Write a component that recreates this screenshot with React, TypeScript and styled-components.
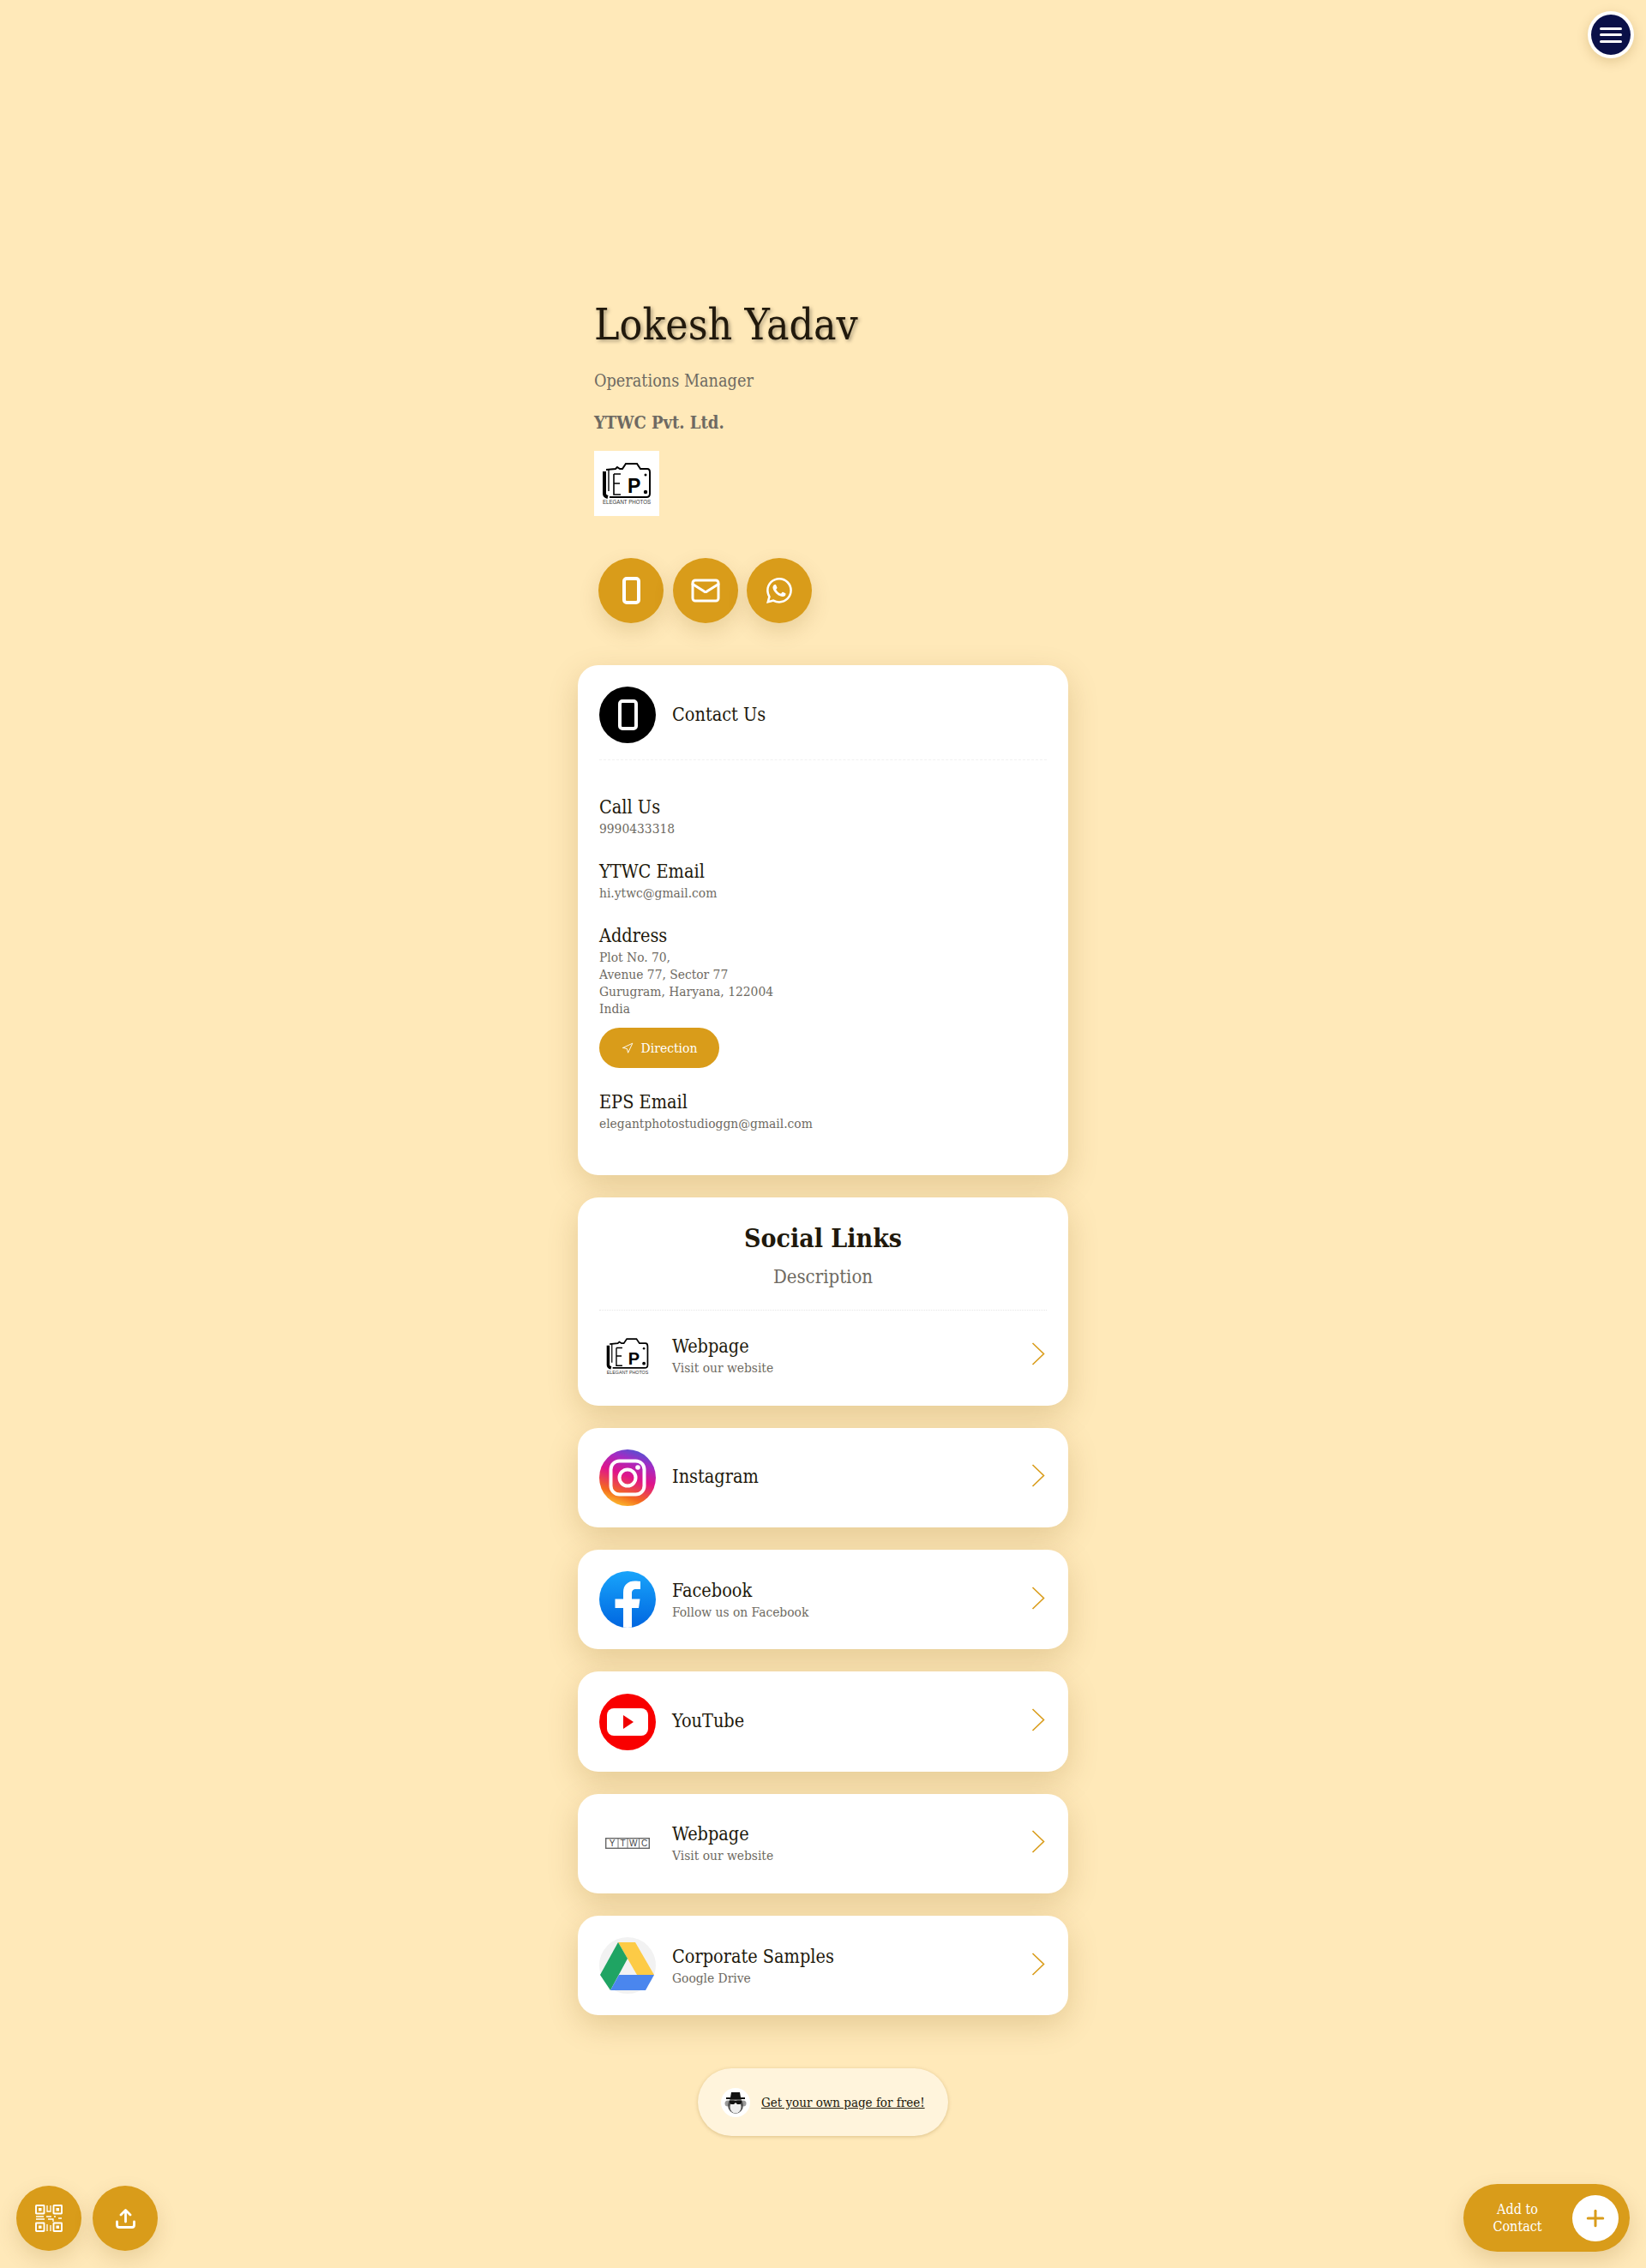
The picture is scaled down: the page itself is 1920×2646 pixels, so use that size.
import React from 'react';
import styled, { createGlobalStyle } from 'styled-components';
import { Mail, Navigation, Plus } from 'lucide-react';
import { BsWhatsapp } from 'react-icons/bs';

const gold = '#d99c1a';
const ink = '#21190c';
const grey = '#6e6a62';
const serif = '"DejaVu Serif Condensed", "DejaVu Serif", serif';

const GlobalStyle = createGlobalStyle`
  html, body {
    margin: 0;
    padding: 0;
    background: #ffe9b9;
  }
  body {
    font-family: ${serif};
    color: ${ink};
  }
`;

const Page = styled.div`
  position: relative;
  min-height: 2646px;
  overflow: hidden;
`;

const Column = styled.main`
  width: 572px;
  margin: 0 auto;
  padding-top: 347px;
`;

const Profile = styled.header`
  padding-left: 19px;
`;

const Name = styled.h1`
  margin: 0;
  font-size: 49.5px;
  line-height: 64px;
  font-weight: 400;
  color: ${ink};
  text-shadow: 2px 2px 4px rgba(0, 0, 0, 0.35);
`;

const Role = styled.p<{ $strong?: boolean }>`
  margin: 20px 0 0;
  font-size: ${p => (p.$strong ? 20 : 19.7)}px;
  line-height: 28px;
  font-weight: ${p => (p.$strong ? 600 : 400)};
  color: ${grey};
`;

const LogoTile = styled.div`
  width: 76px;
  height: 76px;
  margin-top: 19px;
  background: #fff;
`;

const Actions = styled.div`
  display: flex;
  gap: 10.5px;
  margin: 49px 0 49px 5px;
`;

const RoundButton = styled.button`
  width: 76px;
  height: 76px;
  padding: 0;
  border: 0;
  border-radius: 50%;
  display: flex;
  align-items: center;
  justify-content: center;
  color: #fff;
  background: ${gold};
  box-shadow: 0 10px 24px rgba(120, 80, 0, 0.16);
`;

const Card = styled.section`
  background: #fff;
  border-radius: 24px;
  padding: 25px;
  margin-bottom: 26px;
  box-shadow: 0 12px 36px rgba(120, 80, 0, 0.2);
`;

const CardHead = styled.div`
  display: flex;
  align-items: center;
  gap: 19px;
  padding-bottom: 19px;
  border-bottom: 1px dashed #f1f1f1;
  margin-bottom: 40.5px;
`;

const BlackDisc = styled.div`
  width: 66px;
  height: 66px;
  border-radius: 50%;
  background: #000;
  display: flex;
  align-items: center;
  justify-content: center;
`;

const HeadTitle = styled.h2`
  margin: 0;
  font-size: 21.5px;
  font-weight: 400;
  line-height: 28px;
`;

const Info = styled.div`
  margin-bottom: 26px;

  &:last-child {
    margin-bottom: 25px;
  }
`;

const InfoLabel = styled.div`
  font-size: 21.5px;
  line-height: 28px;
  margin-bottom: 1px;
`;

const InfoValue = styled.div`
  font-size: 15.4px;
  line-height: 20px;
  color: ${grey};
`;

const DirectionButton = styled.button`
  display: flex;
  align-items: center;
  justify-content: center;
  gap: 9px;
  width: 140px;
  height: 47px;
  margin-top: 12.5px;
  padding: 0;
  border: 0;
  border-radius: 24px;
  background: ${gold};
  color: #fff;
  font-family: ${serif};
  font-size: 15.5px;
`;

const SocialHead = styled.div`
  text-align: center;
  padding-top: 3px;
  padding-bottom: 23px;
  margin-bottom: 20px;
  border-bottom: 1px dotted #e6e6e6;
`;

const SocialTitle = styled.h2`
  margin: 0;
  font-size: 30px;
  line-height: 40px;
  font-weight: 600;
`;

const SocialDescription = styled.p`
  margin: 9.500px 0 0;
  font-size: 22px;
  line-height: 30px;
  color: ${grey};
`;

const LinkRow = styled.div`
  display: flex;
  align-items: center;
  gap: 19px;
  min-height: 66.3px;
`;

const LinkIcon = styled.div`
  width: 66px;
  height: 66px;
  flex: none;
  display: flex;
  align-items: center;
  justify-content: center;
`;

const LinkText = styled.div`
  flex: 1;
`;

const LinkTitle = styled.div`
  font-size: 21.5px;
  line-height: 28px;
  margin-bottom: 1px;
`;

const LinkSub = styled.div`
  font-size: 15.4px;
  line-height: 20px;
  color: ${grey};
`;

const Chevron = styled.svg`
  width: 16px;
  height: 27px;
  flex: none;
  margin: -4px 2px 0 0;
`;

const Credit = styled.div`
  display: flex;
  align-items: center;
  gap: 13px;
  width: 292px;
  height: 79px;
  box-sizing: border-box;
  margin: 62px auto 0;
  padding-left: 27px;
  border-radius: 40px;
  background: #fff4dc;
  box-shadow: 0 1px 4px rgba(120, 80, 0, 0.26);
`;

const Avatar = styled.div`
  width: 34px;
  height: 34px;
  border-radius: 50%;
  background: #fff;
  display: flex;
  align-items: center;
  justify-content: center;
`;

const CreditLink = styled.a`
  font-size: 15px;
  color: ${ink};
  text-decoration: underline;
`;

const MenuButton = styled.button`
  position: absolute;
  top: 13px;
  right: 14px;
  width: 54px;
  height: 55px;
  box-sizing: border-box;
  padding: 0;
  border: 4px solid #fff;
  border-radius: 50%;
  background: #0a1048;
  display: flex;
  flex-direction: column;
  align-items: center;
  justify-content: center;
  gap: 4.5px;
  box-shadow: 0 4px 14px rgba(120, 80, 0, 0.2);
`;

const MenuBar = styled.span`
  display: block;
  width: 26px;
  height: 3px;
  border-radius: 2px;
  background: #fff;
`;

const Dock = styled.div`
  position: absolute;
  left: 19px;
  bottom: 20px;
  display: flex;
  gap: 13px;
`;

const AddContact = styled.button`
  position: absolute;
  right: 19px;
  bottom: 19px;
  width: 194px;
  height: 79px;
  padding: 0 13px 0 0;
  border: 0;
  border-radius: 40px;
  display: flex;
  align-items: center;
  justify-content: flex-end;
  gap: 24px;
  background: ${gold};
  box-shadow: 0 10px 24px rgba(120, 80, 0, 0.18);
`;

const AddLabel = styled.span`
  width: 80px;
  color: #fff;
  font-family: ${serif};
  font-size: 16px;
  line-height: 20px;
  text-align: center;
`;

const AddDisc = styled.span`
  width: 54px;
  height: 54px;
  flex: none;
  border-radius: 50%;
  background: #fff;
  color: ${gold};
  display: flex;
  align-items: center;
  justify-content: center;
`;

function PhoneIcon({ width, height, stroke }: { width: number; height: number; stroke: number }) {
  return (
    <svg width={width} height={height} viewBox={`0 0 ${width} ${height}`}>
      <rect
        x={stroke / 2}
        y={stroke / 2}
        width={width - stroke}
        height={height - stroke}
        rx={3}
        fill="none"
        stroke="#fff"
        strokeWidth={stroke}
      />
    </svg>
  );
}

function ElegantLogo({ size }: { size: number }) {
  return (
    <svg width={size} height={size} viewBox="0 0 76 76">
      <path
        d="M14 22L25 21L27 19L30 21L33 21L37 15L50 15L54 21L62 21Q65 21 65 25L65 50Q65 54 61 54L18 54"
        fill="none"
        stroke="#000"
        strokeWidth="2"
      />
      <path d="M12 24V50Q12 53 16 54" fill="none" stroke="#000" strokeWidth="4" />
      <path d="M17 22V47" stroke="#000" strokeWidth="1.4" />
      <path d="M23 27V51H31M23 27H31M23 38H30" fill="none" stroke="#000" strokeWidth="1.6" />
      <text x="39" y="49" fontFamily='"Liberation Sans", sans-serif' fontSize="23" fontWeight="700" fill="#000">P</text>
      <circle cx="60" cy="28" r="1.5" fill="#000" />
      <circle cx="60" cy="48" r="2.2" fill="#000" />
      <text x="38" y="62" textAnchor="middle" fontFamily='"Liberation Sans", sans-serif' fontSize="7" fill="#333" textLength="56" lengthAdjust="spacingAndGlyphs">ELEGANT PHOTOS</text>
    </svg>
  );
}

function InstagramIcon() {
  return (
    <svg width="66" height="66" viewBox="0 0 66 66">
      <defs>
        <linearGradient id="igGrad" x1="0.25" y1="1" x2="0.6" y2="0">
          <stop offset="0" stopColor="#fdc830" />
          <stop offset="0.22" stopColor="#f46b1e" />
          <stop offset="0.55" stopColor="#e0148a" />
          <stop offset="0.82" stopColor="#a42bc4" />
          <stop offset="1" stopColor="#5a4fd0" />
        </linearGradient>
      </defs>
      <circle cx="33" cy="33" r="33" fill="url(#igGrad)" />
      <rect x="13.5" y="13.5" width="39" height="39" rx="10" fill="none" stroke="#fff" strokeWidth="4" />
      <circle cx="33" cy="33" r="9.5" fill="none" stroke="#fff" strokeWidth="4" />
      <circle cx="45" cy="21" r="2.8" fill="#fff" />
    </svg>
  );
}

function FacebookIcon() {
  return (
    <svg width="66" height="66" viewBox="0 0 66 66">
      <defs>
        <linearGradient id="fbGrad" x1="0" y1="0" x2="0" y2="1">
          <stop offset="0" stopColor="#18a4fb" />
          <stop offset="1" stopColor="#0066e0" />
        </linearGradient>
        <clipPath id="fbClip">
          <circle cx="33" cy="33" r="33" />
        </clipPath>
      </defs>
      <circle cx="33" cy="33" r="33" fill="url(#fbGrad)" />
      <path
        clipPath="url(#fbClip)"
        d="M28 68V43H18.500V32.500H28V25C28 16 33.500 11.500 41.500 11.500C44.500 11.500 47 11.800 48 12V21H43C39.500 21 38 22.800 38 26V32.500H47.500L46 43H38V68Z"
        fill="#fff"
      />
    </svg>
  );
}

function YoutubeIcon() {
  return (
    <svg width="66" height="66" viewBox="0 0 66 66">
      <circle cx="33" cy="33" r="33" fill="#f90000" />
      <rect x="9" y="17" width="48" height="32" rx="8" fill="#fff" />
      <path d="M28 25L40 33L28 41Z" fill="#f00000" />
    </svg>
  );
}

function YtwcLogo() {
  return (
    <svg width="52" height="13" viewBox="0 0 52 13">
      <rect x="0.7" y="0.7" width="50.600" height="11.600" fill="none" stroke="#666" strokeWidth="1.4" />
      <path d="M15 1V12M26 1V12M39.500 1V12" stroke="#777" />
      <g fontFamily='"Liberation Sans", sans-serif' fontSize="10" fill="#444" textAnchor="middle">
        <text x="8" y="10">Y</text>
        <text x="20.500" y="10">T</text>
        <text x="32.700" y="10">W</text>
        <text x="45.500" y="10">C</text>
      </g>
    </svg>
  );
}

function DriveIcon() {
  return (
    <svg width="66" height="66" viewBox="0 0 66 66">
      <circle cx="33" cy="33" r="33" fill="#f2f2f2" />
      <path d="M22 6H42L64 44H44Z" fill="#fdcb46" />
      <path d="M22 6L1 44L13 62L33 25Z" fill="#1fa463" />
      <path d="M23 44H64L54 62H13Z" fill="#4a86ee" />
    </svg>
  );
}

function QrIcon() {
  return (
    <svg width="32" height="32" viewBox="0 0 32 32" fill="none" stroke="#fff" strokeWidth="1.9">
      <rect x="1" y="1" width="9.500" height="9.500" rx="0.5" />
      <rect x="21.500" y="1" width="9.500" height="9.500" rx="0.5" />
      <rect x="1" y="21.500" width="9.500" height="9.500" rx="0.5" />
      <rect x="21.500" y="21.500" width="9.500" height="9.500" rx="0.5" />
      <g fill="#fff" stroke="none">
        <rect x="4" y="4" width="3.500" height="3.500" />
        <rect x="24.500" y="4" width="3.500" height="3.500" />
        <rect x="4" y="24.500" width="3.500" height="3.500" />
        <rect x="24.500" y="24.500" width="3.500" height="3.500" />
      </g>
      <g strokeWidth="1.300">
        <path d="M14 1V8H18V1M1 14H10M13 14H19M22 14H24M27 16H31M1 17H11M15 17H21V20M14 23V31M18 24V31" />
      </g>
    </svg>
  );
}

function UploadIcon() {
  return (
    <svg width="23" height="23" viewBox="0 0 23 23" fill="none" stroke="#fff" strokeWidth="2.8" strokeLinecap="round" strokeLinejoin="round">
      <path d="M11.500 15V2M6 7L11.500 1.500L17 7" />
      <path d="M1.500 15V19Q1.500 21.500 4 21.500H19Q21.500 21.500 21.500 19V15" />
    </svg>
  );
}

function MonkeyIcon() {
  return (
    <svg width="30" height="30" viewBox="0 0 30 30">
      <circle cx="6" cy="16" r="3.5" fill="#9a9a9a" />
      <circle cx="24" cy="16" r="3.5" fill="#9a9a9a" />
      <ellipse cx="15" cy="18" rx="9" ry="10" fill="#555" />
      <ellipse cx="15" cy="20" rx="6.500" ry="7.500" fill="#eee" />
      <path d="M4 11H26V9H21L20 3H10L9 9H4Z" fill="#111" />
      <path d="M8 13H22V15Q22 17 19.500 17H17L15 15L13 17H10.500Q8 17 8 15Z" fill="#111" />
    </svg>
  );
}

function ArrowRight() {
  return (
    <Chevron viewBox="0 0 16 27" fill="none" stroke={gold} strokeWidth="1.6">
      <path d="M1.500 1L14.500 13.500L1.500 26" />
    </Chevron>
  );
}

type SocialLink = {
  title: string;
  sub?: string;
  icon: React.ReactNode;
};

const links: SocialLink[] = [
  { title: 'Instagram', icon: <InstagramIcon /> },
  { title: 'Facebook', sub: 'Follow us on Facebook', icon: <FacebookIcon /> },
  { title: 'YouTube', icon: <YoutubeIcon /> },
  { title: 'Webpage', sub: 'Visit our website', icon: <YtwcLogo /> },
  { title: 'Corporate Samples', sub: 'Google Drive', icon: <DriveIcon /> },
];

function LinkContent({ title, sub, icon }: SocialLink) {
  return (
    <LinkRow>
      <LinkIcon>{icon}</LinkIcon>
      <LinkText>
        <LinkTitle>{title}</LinkTitle>
        {sub && <LinkSub>{sub}</LinkSub>}
      </LinkText>
      <ArrowRight />
    </LinkRow>
  );
}

export default function App() {
  return (
    <Page>
      <GlobalStyle />
      <MenuButton aria-label="menu">
        <MenuBar />
        <MenuBar />
        <MenuBar />
      </MenuButton>

      <Column>
        <Profile>
          <Name>Lokesh Yadav</Name>
          <Role>Operations Manager</Role>
          <Role $strong>YTWC Pvt. Ltd.</Role>
          <LogoTile>
            <ElegantLogo size={76} />
          </LogoTile>
          <Actions>
            <RoundButton aria-label="call">
              <PhoneIcon width={21} height={32} stroke={4} />
            </RoundButton>
            <RoundButton aria-label="email">
              <Mail size={36} strokeWidth={2} />
            </RoundButton>
            <RoundButton aria-label="whatsapp">
              <BsWhatsapp size={30} />
            </RoundButton>
          </Actions>
        </Profile>

        <Card>
          <CardHead>
            <BlackDisc>
              <PhoneIcon width={23} height={36} stroke={4} />
            </BlackDisc>
            <HeadTitle>Contact Us</HeadTitle>
          </CardHead>
          <Info>
            <InfoLabel>Call Us</InfoLabel>
            <InfoValue>9990433318</InfoValue>
          </Info>
          <Info>
            <InfoLabel>YTWC Email</InfoLabel>
            <InfoValue>hi.ytwc@gmail.com</InfoValue>
          </Info>
          <Info>
            <InfoLabel>Address</InfoLabel>
            <InfoValue>
              Plot No. 70,
              <br />
              Avenue 77, Sector 77
              <br />
              Gurugram, Haryana, 122004
              <br />
              India
            </InfoValue>
            <DirectionButton>
              <Navigation size={14} strokeWidth={1.6} />
              Direction
            </DirectionButton>
          </Info>
          <Info>
            <InfoLabel>EPS Email</InfoLabel>
            <InfoValue>elegantphotostudioggn@gmail.com</InfoValue>
          </Info>
        </Card>

        <Card>
          <SocialHead>
            <SocialTitle>Social Links</SocialTitle>
            <SocialDescription>Description</SocialDescription>
          </SocialHead>
          <LinkContent title="Webpage" sub="Visit our website" icon={<ElegantLogo size={66} />} />
        </Card>

        {links.map(link => (
          <Card key={link.title + (link.sub || '')}>
            <LinkContent {...link} />
          </Card>
        ))}

        <Credit>
          <Avatar>
            <MonkeyIcon />
          </Avatar>
          <CreditLink>Get your own page for free!</CreditLink>
        </Credit>
      </Column>

      <Dock>
        <RoundButton aria-label="qr code">
          <QrIcon />
        </RoundButton>
        <RoundButton aria-label="share">
          <UploadIcon />
        </RoundButton>
      </Dock>

      <AddContact>
        <AddLabel>Add to Contact</AddLabel>
        <AddDisc>
          <Plus size={30} strokeWidth={2.4} />
        </AddDisc>
      </AddContact>
    </Page>
  );
}
